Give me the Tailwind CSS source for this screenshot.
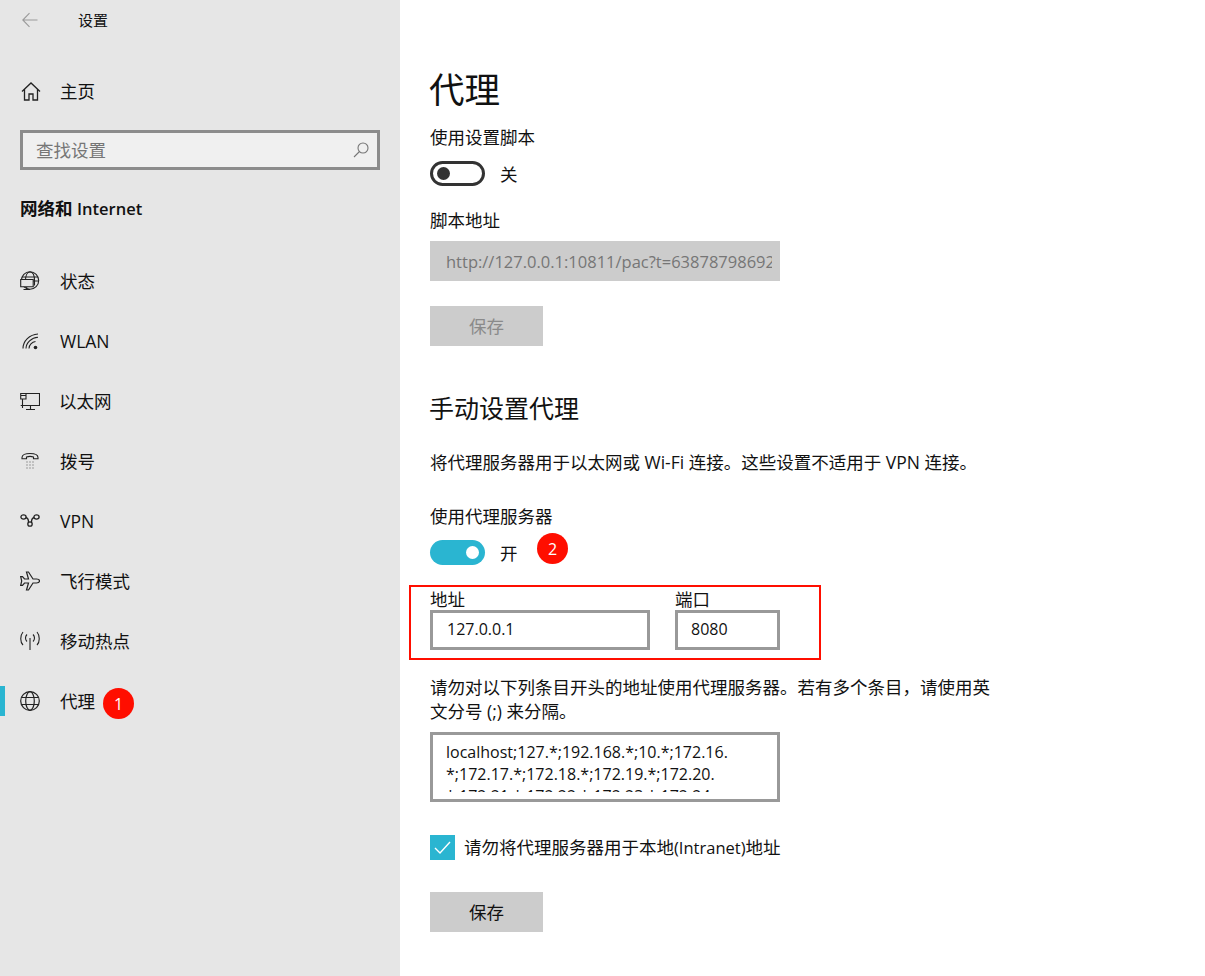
<!DOCTYPE html>
<html lang="zh-CN">
<head>
  <meta charset="UTF-8" />
  <title>设置 - 代理</title>
  <script src="https://cdn.jsdelivr.net/npm/@tailwindcss/browser@4"></script>
</head>
<body class="bg-white text-[#111] font-['Open_Sans','Noto_Sans_CJK_SC',sans-serif] text-[17.5px] leading-6 overflow-hidden">
<div class="relative flex h-[976px] w-[1205px]">

  <!-- Sidebar -->
  <aside class="w-[400px] shrink-0 bg-[#e6e6e6]">
    <div class="flex h-10 items-center">
      <svg class="ml-[22px] h-4 w-4 text-[#9a9a9a]" viewBox="0 0 16 16" fill="none" stroke="currentColor" stroke-width="1.1"><path d="M15.500 8H.8M7.500 1.200.8 8l6.700 6.800"/></svg>
      <span class="ml-10 text-[15px]">设置</span>
    </div>
    <div class="mt-[21px] flex h-[60px] items-center">
      <svg class="ml-[21px] h-[19px] w-[20px]" viewBox="0 0 20 19" fill="none" stroke="#222" stroke-width="1.3"><path d="M1 9.500 10 1l9 8.500M3.500 7.500V18H8v-6h4v6h4.500V7.500"/></svg>
      <span class="ml-[19px]">主页</span>
    </div>
    <div class="mx-5 mt-[9px] flex h-10 items-center justify-between border-[3px] border-[#8c8c8c] bg-[#f0f0f0] pl-[13px] pr-[8px] text-[#767676]">
      <span>查找设置</span>
      <svg class="h-4 w-4" viewBox="0 0 16 16" fill="none" stroke="#767676" stroke-width="1.1"><circle cx="10" cy="6" r="5"/><path d="M6.500 9.500 1 15"/></svg>
    </div>
    <div class="ml-5 mt-[26px] font-semibold leading-6">网络和 <span class="text-[16.500px]">Internet</span></div>
    <nav class="mt-[30px]">
      <a class="flex h-[60px] items-center pl-5"><svg class="h-5 w-5" viewBox="0 0 20 20" fill="none" stroke="#222" stroke-width="1.100"><circle cx="10" cy="9.500" r="8.700"/><path d="M5.500 9.500C5.500 4 7.500 1 10 1s4.500 3 4.500 8.500v5M2 6h16M5 10h13.500"/><path d="M.7 8.500h12.500v7.300H.7zM6.700 15.800v2.400M3.500 18.500h6.500" fill="#e6e6e6"/></svg><span class="ml-5">状态</span></a>
      <a class="flex h-[60px] items-center pl-5"><svg class="h-5 w-5" viewBox="0 0 20 20" fill="none" stroke="#222" stroke-width="1.100"><path d="M3 17.500C3 10 9.500 3.500 18 3M6 17.500C6 12 11.500 6.500 18 6.200M9 17.500c0-3.500 3-6.500 6.500-7"/><circle cx="15.500" cy="16.500" r="1.800" fill="#222" stroke="none"/></svg><span class="ml-5">WLAN</span></a>
      <a class="flex h-[60px] items-center pl-5"><svg class="h-5 w-5" viewBox="0 0 20 20" fill="none" stroke="#222" stroke-width="1.100"><path d="M6 2.500h13.500v12H.7M10.500 14.500V18M6 18.500h9M.7 2.500H6V8H.7zM2.500 8v9M.7 4.500H6"/></svg><span class="ml-5 -translate-x-px">以太网</span></a>
      <a class="flex h-[60px] items-center pl-5"><svg class="h-5 w-5" viewBox="0 0 20 20" fill="none" stroke="#222" stroke-width="1.100"><path d="M2 7.800V6.500C2 4 5.500 2.500 10 2.500s8 1.500 8 4v1.300h-4.500V6c-2-.7-5-.7-7 0v1.800z"/><path d="M6.500 11h1M9.500 11h1M12.500 11h1M6.500 14h1M9.500 14h1M12.500 14h1M6.500 17h1M9.500 17h1M12.500 17h1" stroke="#555"/></svg><span class="ml-5">拨号</span></a>
      <a class="flex h-[60px] items-center pl-5"><svg class="h-5 w-5" viewBox="0 0 20 20" fill="none" stroke="#222" stroke-width="1.300"><ellipse cx="3.500" cy="6" rx="2.600" ry="2.100"/><ellipse cx="16.500" cy="6" rx="2.600" ry="2.100"/><circle cx="10" cy="13" r="2.200"/><path d="M6 6.500c2.500.7 2.500 3 2.500 4.800M14 6.500c-2.500.7-2.500 3-2.500 4.800"/></svg><span class="ml-5">VPN</span></a>
      <a class="flex h-[60px] items-center pl-5"><svg class="h-5 w-5" viewBox="0 0 20 20" fill="none" stroke="#222" stroke-width="1.200"><path d="M19.500 10c0-1.200-1.500-2-3-2h-3.500L8.500 1H6.500l2 7H4.500L2.500 5.700H.7l1 4.300-1 4.300h1.800l2-2.300h4l-2 7h2l4.500-7h3.500c1.500 0 3-.8 3-2z"/></svg><span class="ml-5">飞行模式</span></a>
      <a class="flex h-[60px] items-center pl-5"><svg class="h-5 w-5" viewBox="0 0 20 20" fill="none" stroke="#222" stroke-width="1.100"><path d="M10 7v12M7 3.500c-2 2-2 5 0 7M13 3.500c2 2 2 5 0 7M3 1c-3 3.500-3 10 0 13M17 1c3 3.500 3 10 0 13"/></svg><span class="ml-5">移动热点</span></a>
      <a class="relative flex h-[60px] items-center pl-5"><span class="absolute left-0 top-[15px] h-[30px] w-[5px] bg-[#2ab5d1]"></span><svg class="h-5 w-5" viewBox="0 0 20 20" fill="none" stroke="#222" stroke-width="1.200"><circle cx="10" cy="10" r="9.300"/><ellipse cx="10" cy="10" rx="4.300" ry="9.300"/><path d="M1.500 6.500h17M1.500 13.500h17"/></svg><span class="ml-5">代理</span>
        <span class="absolute left-[103px] top-[17px] flex h-[31px] w-[31px] items-center justify-center rounded-full bg-[#ff0e00] text-[16px] text-white">1</span></a>
    </nav>
  </aside>

  <!-- Content -->
  <main class="flex-1 pl-[30px]">
    <h1 class="mt-[65px] h-[50px] -ml-[1px] text-[35.500px] leading-[48px]">代理</h1>
    <div class="mt-[10px]">使用设置脚本</div>
    <div class="mt-3 flex h-[25px] items-center">
      <span class="flex h-[25px] w-[55px] items-center rounded-full border-[3px] border-[#333] pl-[4px]"><span class="h-[13px] w-[13px] rounded-full bg-[#333]"></span></span>
      <span class="ml-[15px]">关</span>
    </div>
    <div class="mt-[22px]">脚本地址</div>
    <input readonly value="http://127.0.0.1:10811/pac?t=63878798692" class="mt-[9px] block h-10 w-[350px] bg-[#ccc] pl-4 pr-2 text-[16.500px] text-[#767676] outline-none" />
    <button class="mt-[25px] block h-10 w-[113px] bg-[#ccc] text-[#8a8a8a]">保存</button>
    <h2 class="mt-[44px] -ml-[1px] text-[25px] leading-9">手动设置代理</h2>
    <p class="mt-[24px]">将代理服务器用于以太网或 Wi-Fi 连接。这些设置不适用于 VPN 连接。</p>
    <div class="mt-[30px]">使用代理服务器</div>
    <div class="mt-3 flex h-[25px] items-center">
      <span class="flex h-[25px] w-[55px] items-center justify-end rounded-full bg-[#2ab5d1] pr-[6px]"><span class="h-[13px] w-[13px] rounded-full bg-white"></span></span>
      <span class="ml-[15px]">开</span>
    </div>
    <div class="mt-[22px] flex gap-[25px]">
      <label class="w-[220px] leading-[24px]">地址
        <input readonly value="127.0.0.1" class="-mt-[1px] block h-10 w-[220px] border-[3px] border-[#999] bg-white px-[14px] pb-[2px] text-[16px] outline-none" /></label>
      <label class="w-[105px] leading-[24px]">端口
        <input readonly value="8080" class="-mt-[1px] block h-10 w-[105px] border-[3px] border-[#999] bg-white px-[13px] pb-[2px] text-[16px] outline-none" /></label>
    </div>
    <p class="mt-[25px] w-[570px]">请勿对以下列条目开头的地址使用代理服务器。若有多个条目，请使用英文分号 (;) 来分隔。</p>
    <div class="mt-[9px] h-[70px] w-[350px] border-[3px] border-[#999] px-[13px] pb-[5px] pt-[6px]">
      <div class="h-[51px] overflow-hidden text-[16px] leading-[22px]">localhost;127.*;192.168.*;10.*;172.16.<br>*;172.17.*;172.18.*;172.19.*;172.20.<br>*;172.21.*;172.22.*;172.23.*;172.24.</div>
    </div>
    <div class="mt-[33px] flex h-[25px] items-center">
      <span class="flex h-[25px] w-[25px] items-center justify-center bg-[#2ab5d1]"><svg class="h-[17px] w-[17px]" viewBox="0 0 17 17" fill="none" stroke="#fff" stroke-width="1.400"><path d="M1 9l5 5L16 3"/></svg></span>
      <span class="ml-[9px]">请勿将代理服务器用于本地<span class="text-[16.500px]">(Intranet)</span>地址</span>
    </div>
    <button class="mt-[32px] block h-10 w-[113px] bg-[#ccc]">保存</button>
  </main>

  <!-- Annotations -->
  <span class="absolute left-[537px] top-[533px] flex h-[31px] w-[31px] items-center justify-center rounded-full bg-[#ff0e00] text-[16px] text-white">2</span>
  <div class="absolute left-[409px] top-[585px] h-[75px] w-[412px] border-2 border-[#ff0e00]"></div>
</div>
</body>
</html>
